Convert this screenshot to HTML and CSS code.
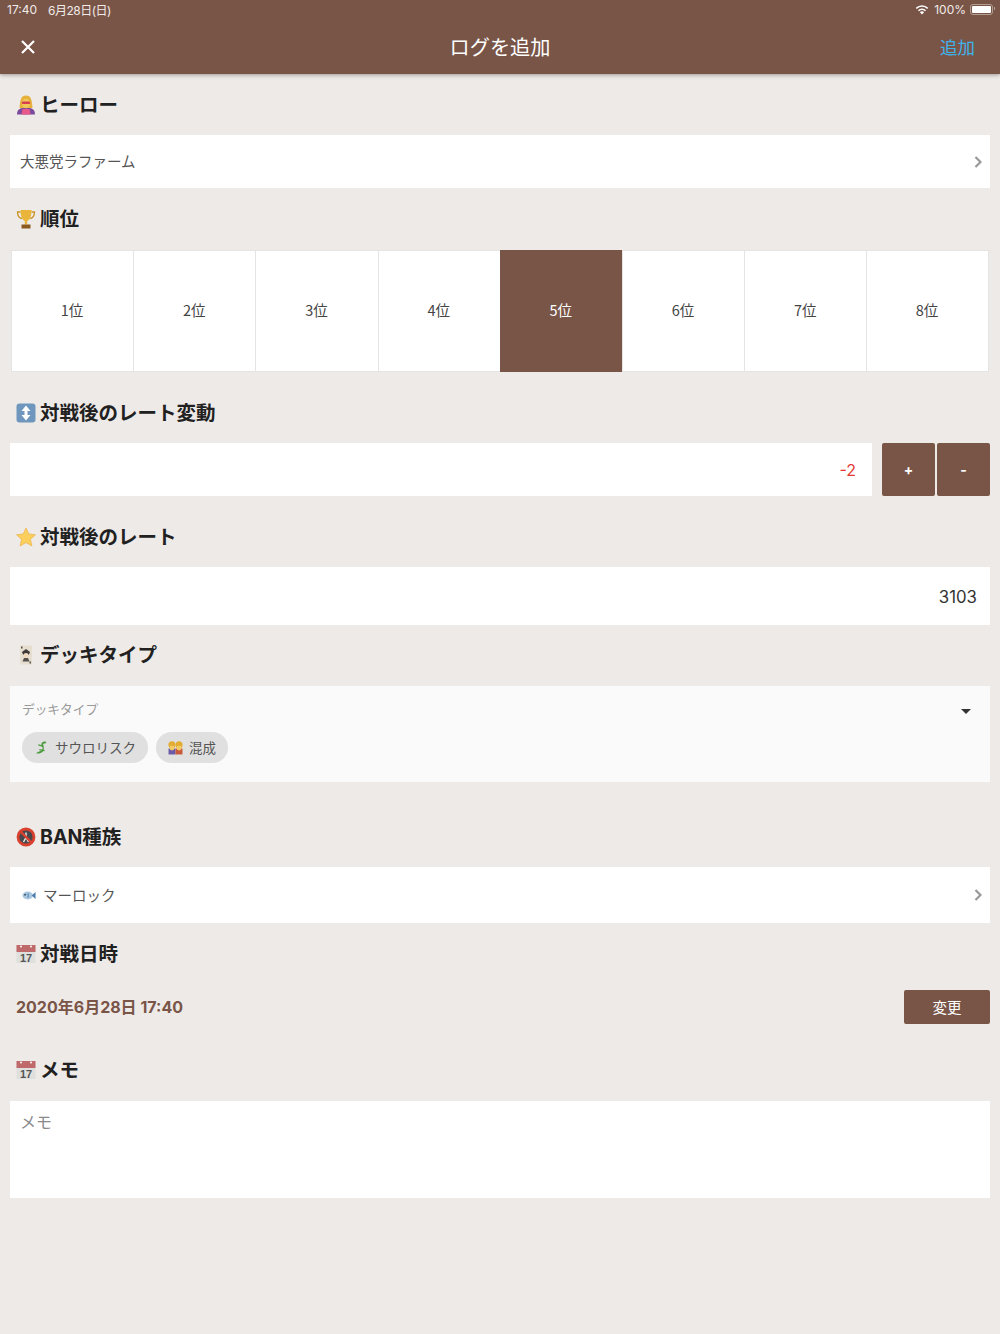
FILE: index.html
```html
<!DOCTYPE html>
<html lang="ja">

<head>
  <meta charset="UTF-8" />
  <title>ログを追加</title>
  <link rel="stylesheet" href="styles.css">
</head>

<body>
  <!-- Icon sheet -->
  <svg class="sheet" width="0" height="0">
    <symbol id="calendar" viewBox="0 0 20 20">
      <rect x="0.5" y="1" width="19" height="18" fill="#dfdfdd" />
      <rect x="0.5" y="1" width="19" height="7" fill="#c0696b" />
      <circle cx="5" cy="2.5" r="1.1" fill="#f4f0ee" />
      <circle cx="15" cy="2.5" r="1.1" fill="#f4f0ee" />
      <text x="10" y="18" text-anchor="middle" class="cal-num">17</text>
    </symbol>
  </svg>

  <!-- Top bar -->
  <header class="topbar">
    <div class="status">
      <span class="status-time">17:40</span>
      <span class="status-date">6月28日(日)</span>
      <span class="status-right">
        <svg width="14" height="11" viewBox="0 0 14 11">
          <path d="M7 10.6 4.9 8.2a3 3 0 0 1 4.2 0Z" fill="#fff" />
          <path d="M3.5 6.8a5 5 0 0 1 7 0M1.3 4.4a8.2 8.2 0 0 1 11.4 0" fill="none" stroke="#fff" stroke-width="1.5" />
        </svg>
        <span class="status-pct">100%</span>
        <span class="battery"><span class="battery-fill"></span></span>
      </span>
    </div>
    <div class="navbar">
      <svg class="close" width="16" height="16" viewBox="0 0 16 16">
        <path d="M2 2 14 14M14 2 2 14" stroke="#fff" stroke-width="2.2" fill="none" />
      </svg>
      <h1>ログを追加</h1>
      <span class="add">追加</span>
    </div>
  </header>

  <main class="content">
    <h2 class="first">
      <svg class="emoji" viewBox="0 0 20 20">
        <path d="M1 19.500c0-5 3-7 9-7s9 2 9 7Z" fill="#7b4a9c" />
        <path d="M6.500 14h7l1 5.500h-9Z" fill="#e8588a" />
        <path d="M3.500 13C4 5 5 .5 10 .5S16 5 16.500 13Z" fill="#e6b23c" />
        <ellipse cx="10" cy="8.500" rx="4" ry="4.800" fill="#f3c65a" />
        <rect x="5.800" y="6.500" width="8.400" height="2.400" rx="1" fill="#d8404f" />
      </svg>
      ヒーロー
    </h2>
    <div class="card select">
      <span>大悪党ラファーム</span>
      <svg class="chevron" width="8" height="12" viewBox="0 0 8 12">
        <path d="M1.500 1 6.500 6 1.500 11" fill="none" stroke="#999" stroke-width="2.200" />
      </svg>
    </div>

    <h2 class="near">
      <svg class="emoji" viewBox="0 0 20 20">
        <path d="M4.500 3H1.500c0 4 1.500 6 4.500 6.500M15.500 3h3c0 4-1.500 6-4.500 6.500" fill="none" stroke="#c9962b" stroke-width="1.300" />
        <path d="M4.500 1h11c0 7-2 10-4.300 11v3.500H8.800V12C6.500 11 4.500 8 4.500 1Z" fill="#e9b53a" />
        <rect x="5.500" y="15.500" width="9" height="4" fill="#8a5a1e" />
      </svg>
      順位
    </h2>
    <div class="ranks">
      <div class="rank">1位</div>
      <div class="rank">2位</div>
      <div class="rank">3位</div>
      <div class="rank">4位</div>
      <div class="rank active">5位</div>
      <div class="rank">6位</div>
      <div class="rank">7位</div>
      <div class="rank">8位</div>
    </div>

    <h2 class="far">
      <svg class="emoji" viewBox="0 0 20 20">
        <rect x="0.500" y="0.500" width="19" height="19" rx="3" fill="#6f97bd" />
        <path d="M10 2.500 14.500 8H11.500V12H14.500L10 17.500 5.500 12H8.500V8H5.500Z" fill="#fff" />
      </svg>
      対戦後のレート変動
    </h2>
    <div class="rate-row">
      <div class="card rate-change">-2</div>
      <button class="step step-plus" type="button">+</button>
      <button class="step" type="button">-</button>
    </div>

    <h2 class="far">
      <svg class="emoji" viewBox="0 0 20 20">
        <path d="M10 1 12.800 7 19.500 7.800 14.500 12.300 15.900 19 10 15.600 4.100 19 5.500 12.300 .5 7.800 7.200 7Z" fill="#fbcf5c" stroke="#eda93a" stroke-width=".6" />
      </svg>
      対戦後のレート
    </h2>
    <div class="card rate-value">3103</div>

    <h2 class="tight">
      <svg class="emoji" viewBox="0 0 20 20">
        <rect x="4" y="0.500" width="12" height="19" fill="#e6decf" />
        <path d="M6 7 10 4 14 7 13 9.500H7Z" fill="#3d3a3a" />
        <circle cx="10" cy="10.500" r="2.400" fill="#f1d9c0" />
        <path d="M6.500 16.500 8 13h4L13.500 16.500Z" fill="#55504e" />
        <path d="M5 1.500h1.500v2H5ZM13.500 16.500H15v2h-1.500Z" fill="#55504e" />
      </svg>
      デッキタイプ
    </h2>
    <div class="deck">
      <div class="deck-top">
        <span class="deck-label">デッキタイプ</span>
        <span class="caret"></span>
      </div>
      <div class="chips">
        <span class="chip">
          <svg class="chip-icon" viewBox="0 0 14 14">
            <path d="M11 1.500C8 1.500 6.500 3 7 5s2 3 0 4.500-3.500 1-5 3c2 .5 5 0 6.500-2S8.500 6 8.500 4.500 10 3 11.500 3Z" fill="#4c9a3e" />
            <path d="M4 4.500 9 6M5 9l5 1" stroke="#4c9a3e" stroke-width="1.100" />
          </svg>
          サウロリスク
        </span>
        <span class="chip">
          <svg class="chip-icon" viewBox="0 0 14 14">
            <rect x="0.500" y="8" width="6.500" height="5.500" fill="#6a5aa8" />
            <rect x="7" y="8" width="6.500" height="5.500" fill="#c85a3c" />
            <circle cx="3.700" cy="4.500" r="3.300" fill="#e2ac33" />
            <circle cx="10.300" cy="4.500" r="3.300" fill="#e2ac33" />
            <circle cx="3.700" cy="7.500" r="2.300" fill="#f4ca63" />
            <circle cx="10.300" cy="7.500" r="2.300" fill="#f4ca63" />
          </svg>
          混成
        </span>
      </div>
    </div>

    <h2 class="widest">
      <svg class="emoji" viewBox="0 0 20 20">
        <circle cx="10" cy="10" r="8" fill="#46484c" stroke="#d8402f" stroke-width="2.800" />
        <path d="M10 5.500v5M10 10.500 7.500 15M10 10.500 12.500 15" stroke="#e9e9e9" stroke-width="1.500" fill="none" />
        <path d="M4.300 4.300 15.700 15.700" stroke="#d8402f" stroke-width="2.400" />
      </svg>
      BAN種族
    </h2>
    <div class="card select ban">
      <span class="ban-name">
        <svg class="fish" viewBox="0 0 16 12">
          <ellipse cx="6.500" cy="6" rx="6" ry="4.500" fill="#a9c8e0" />
          <path d="M11 6 15.500 2V10Z" fill="#4f7fae" />
          <circle cx="3.500" cy="5" r="1" fill="#2b3e50" />
          <path d="M7 3.500V8.500" stroke="#4f7fae" stroke-width="1.200" />
        </svg>
        マーロック
      </span>
      <svg class="chevron" width="8" height="12" viewBox="0 0 8 12">
        <path d="M1.500 1 6.500 6 1.500 11" fill="none" stroke="#999" stroke-width="2.200" />
      </svg>
    </div>

    <h2 class="date-head">
      <svg class="emoji" viewBox="0 0 20 20"><use href="#calendar" /></svg>
      対戦日時
    </h2>
    <div class="date-row">
      <span class="date">2020年6月28日 17:40</span>
      <button class="change" type="button">変更</button>
    </div>

    <h2 class="memo-head">
      <svg class="emoji" viewBox="0 0 20 20"><use href="#calendar" /></svg>
      メモ
    </h2>
    <div class="card memo">メモ</div>
  </main>
</body>

</html>
```
FILE: styles.css
```css
html,
body {
  margin: 0;
  height: 100%;
}

body {
  background-color: #eeeae7;
  color: #212121;
  font-family: "Noto Sans CJK JP", "Noto Sans", sans-serif;
  overflow: hidden;
}

.sheet {
  display: none;
}

.cal-num {
  font-family: "Liberation Sans", sans-serif;
  font-size: 11px;
  fill: #555;
}

/* Top bar */
.topbar {
  height: 74px;
  background-color: #795548;
  color: #fff;
  box-shadow: 0 1px 4px rgba(0, 0, 0, 0.35);
}

.status {
  height: 20px;
  padding: 0 7px 2px;
  box-sizing: border-box;
  display: flex;
  align-items: center;
  font-family: "Inter", "Noto Sans CJK JP", sans-serif;
  font-size: 12px;
  color: #f1ebe8;
}

.status-date {
  margin-left: 11px;
  letter-spacing: -0.5px;
}

.status-right {
  margin-left: auto;
  display: flex;
  align-items: center;
}

.status-pct {
  margin-left: 5px;
}

.battery {
  width: 19px;
  height: 7px;
  margin-left: 4px;
  padding: 1px;
  border: 1px solid #b39d93;
  border-radius: 3px;
  display: block;
  position: relative;
}

.battery::after {
  content: "";
  position: absolute;
  top: 2px;
  right: -3px;
  width: 1px;
  height: 3px;
  background-color: #b39d93;
}

.battery-fill {
  display: block;
  height: 100%;
  background-color: #fff;
  border-radius: 1px;
}

.navbar {
  height: 54px;
  padding: 0 25px 0 20px;
  display: flex;
  align-items: center;
  justify-content: space-between;
  position: relative;
}

.navbar h1 {
  position: absolute;
  left: 0;
  right: 0;
  margin: 0;
  padding-bottom: 2px;
  text-align: center;
  font-size: 20.200px;
  font-weight: 400;
}

.add {
  padding-bottom: 2px;
  font-size: 17.500px;
  color: #3fb2ea;
}

/* Form */
.content {
  padding: 0 10px;
}

h2 {
  height: 30px;
  margin: 0 0 15px;
  padding-left: 6px;
  box-sizing: border-box;
  display: flex;
  align-items: center;
  gap: 4px;
  font-family: "Inter", "Noto Sans CJK JP", sans-serif;
  font-size: 19.500px;
  font-weight: 700;
  line-height: 28px;
}

h2.first {
  margin-top: 16px;
}

h2.near {
  margin-top: 16px;
  margin-bottom: 16px;
}

h2.far {
  margin-top: 26px;
}

h2.tight {
  margin-top: 15px;
  margin-bottom: 16px;
}

h2.widest {
  margin-top: 40px;
}

h2.date-head {
  margin-top: 16px;
  margin-bottom: 21px;
}

h2.memo-head {
  margin-top: 31px;
  margin-bottom: 16px;
}

.emoji {
  width: 20px;
  height: 20px;
  flex: none;
}

.card {
  background-color: #fff;
  color: #555;
}

.select {
  height: 53px;
  padding: 0 8px 0 10px;
  display: flex;
  align-items: center;
  justify-content: space-between;
  font-size: 14.500px;
}

.select > span {
  padding-bottom: 2px;
}

.ban {
  height: 56px;
  padding-left: 12px;
}

.ban-name {
  display: flex;
  align-items: center;
  gap: 7px;
}

.fish {
  width: 14px;
  height: 11px;
  margin-top: 2px;
}

.ranks {
  height: 122px;
  margin: 0 1px;
  display: grid;
  grid-template-columns: repeat(8, 122.200px);
  background-color: #fff;
}

.rank {
  padding: 0 1px 4px 0;
  display: flex;
  align-items: center;
  justify-content: center;
  font-size: 14.500px;
  color: #444;
  border: 1px solid #e4e4e4;
  border-right: 0;
}

.rank:last-child {
  border-right: 1px solid #e4e4e4;
}

.rank.active {
  background-color: #795548;
  border-color: #795548;
  color: #fff;
}

.rate-row {
  height: 53px;
  display: flex;
  gap: 2px;
}

.rate-change {
  flex: 1;
  margin-right: 8px;
  padding-right: 16px;
  display: flex;
  align-items: center;
  justify-content: flex-end;
  color: #e53935;
  font-family: "Inter", sans-serif;
  font-size: 16px;
}

.step {
  width: 53px;
  padding: 0;
  border: 0;
  border-radius: 2px;
  background-color: #795548;
  color: #fff;
  font-family: "Inter", sans-serif;
  font-size: 14px;
  font-weight: 700;
}

.rate-value {
  height: 58px;
  padding: 1px 13px 0 0;
  box-sizing: border-box;
  display: flex;
  align-items: center;
  justify-content: flex-end;
  font-family: "Inter", sans-serif;
  font-size: 16.800px;
  color: #333;
}

.deck {
  height: 96px;
  padding: 0 12px;
  background-color: #fafafa;
  box-sizing: border-box;
}

.deck-top {
  height: 46px;
  display: flex;
  align-items: center;
  justify-content: space-between;
}

.deck-label {
  padding-bottom: 2px;
  font-size: 12.700px;
  color: #999;
}

.caret {
  width: 0;
  height: 0;
  margin: 5px 7px 0 0;
  border-left: 5px solid transparent;
  border-right: 5px solid transparent;
  border-top: 5px solid #333;
}

.chips {
  display: flex;
  gap: 8px;
}

.chip {
  height: 31px;
  padding: 0 12px 1px;
  box-sizing: border-box;
  display: flex;
  align-items: center;
  gap: 6px;
  background-color: #e0e0e0;
  border-radius: 16px;
  font-size: 13.500px;
  color: #555;
}

.chip-icon {
  width: 15px;
  height: 15px;
  margin-top: 1px;
}

.date-row {
  height: 34px;
  padding-left: 6px;
  display: flex;
  align-items: center;
  justify-content: space-between;
}

.date {
  padding-bottom: 2px;
  font-family: "Inter", "Noto Sans CJK JP", sans-serif;
  font-size: 16px;
  font-weight: 700;
  color: #795548;
}

.change {
  width: 86px;
  height: 34px;
  padding: 0 0 2px;
  border: 0;
  border-radius: 2px;
  background-color: #795548;
  color: #fff;
  font-family: "Noto Sans CJK JP", sans-serif;
  font-size: 14.500px;
}

.memo {
  height: 97px;
  padding: 8px 10px;
  box-sizing: border-box;
  font-size: 16px;
  color: #8a8a8a;
}
```
